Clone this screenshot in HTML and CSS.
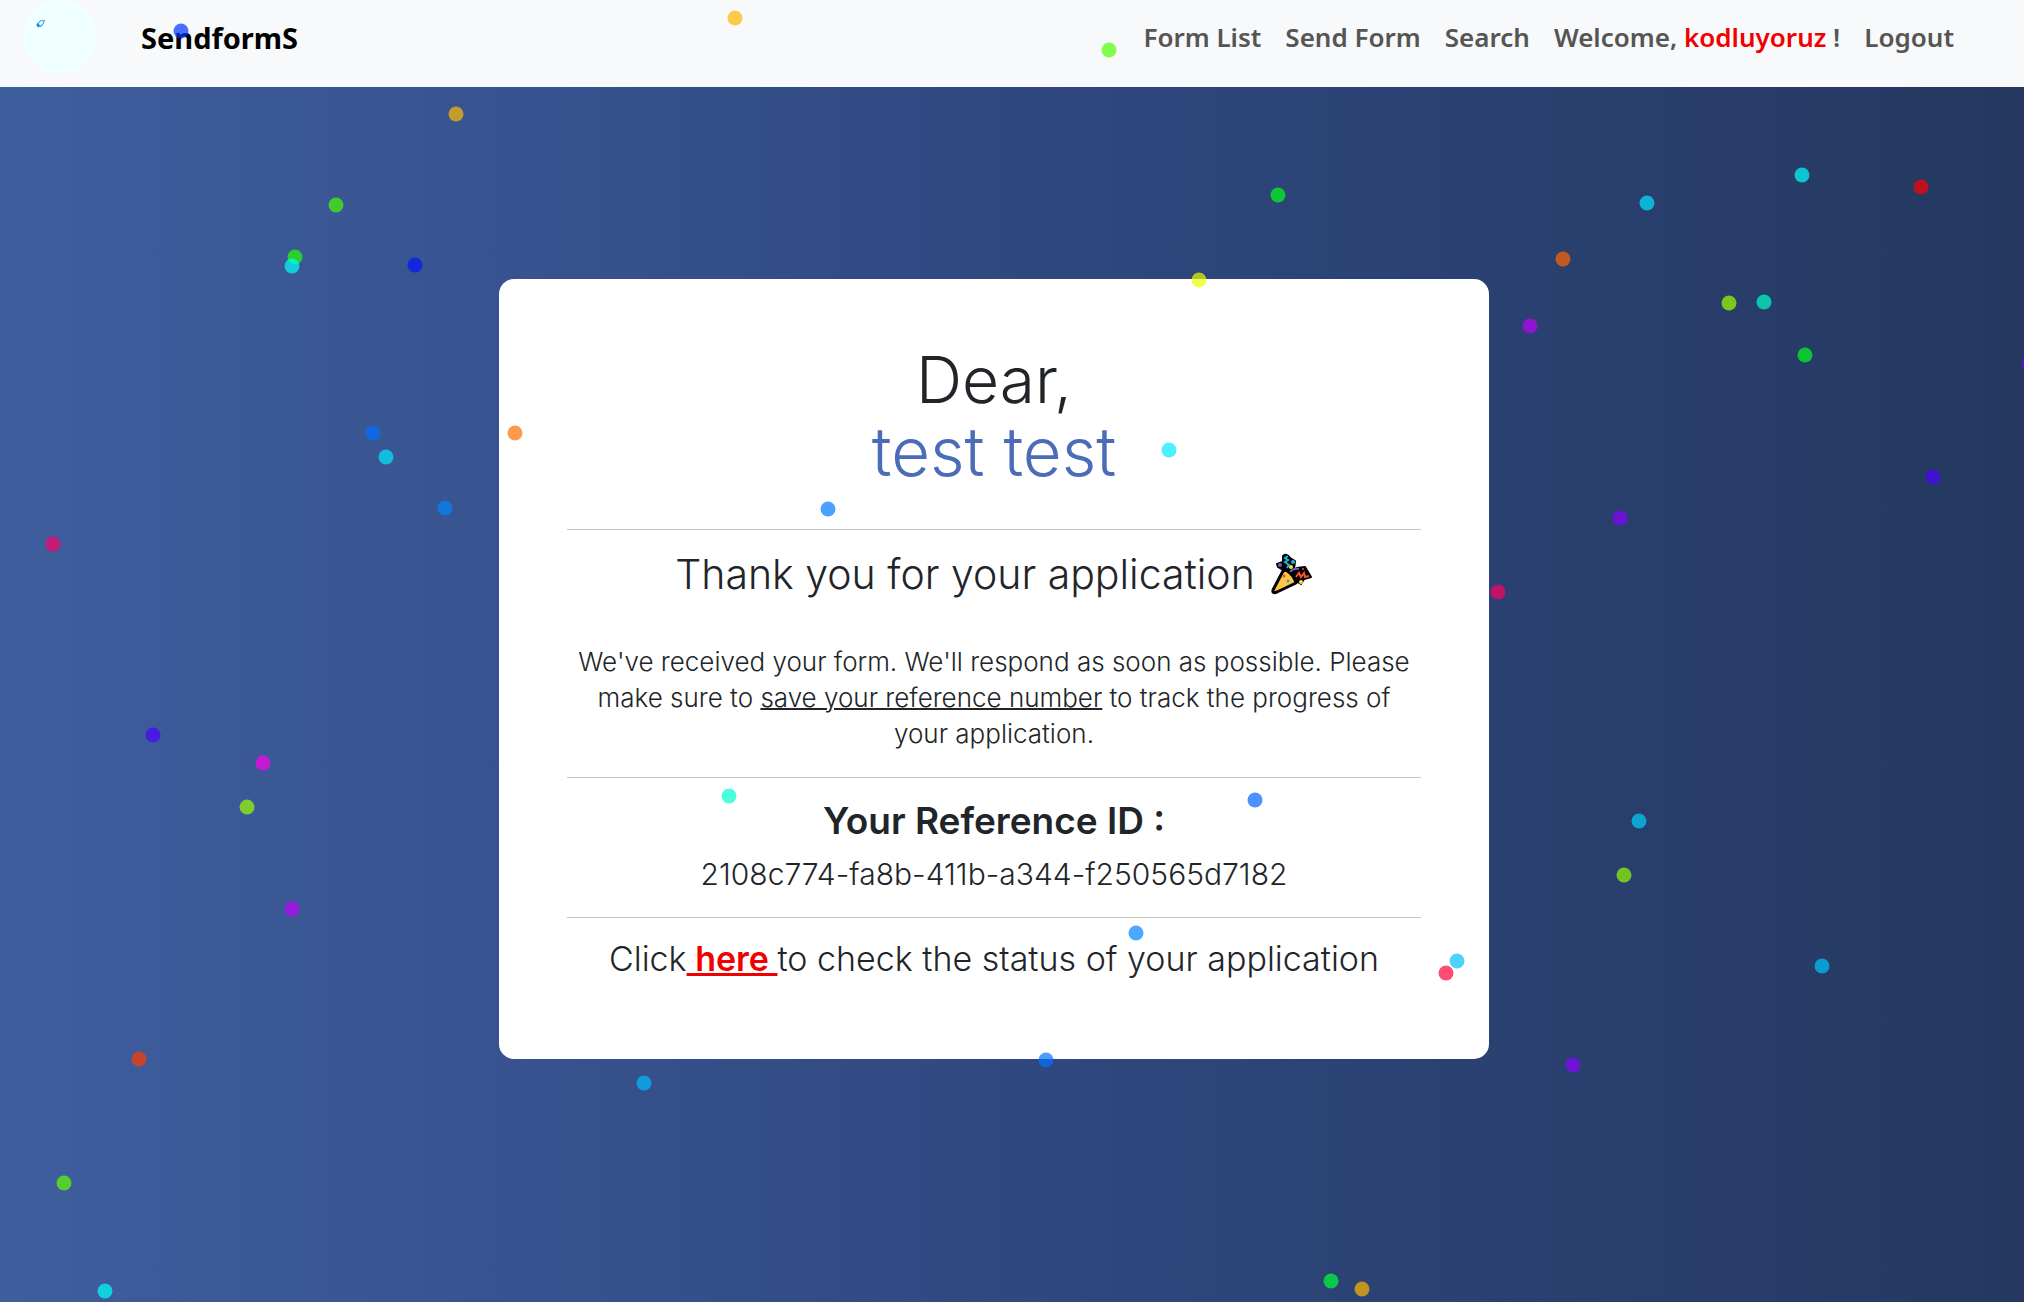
FILE: index.html
```
<!DOCTYPE html>
<html lang="en">
<head>
<meta charset="utf-8">
<title>SendformS</title>
<link rel="stylesheet" href="styles.css">
</head>
<body>
<header class="navbar">
  <a class="logo" href="#" aria-label="Home">
    <svg viewBox="0 0 74 74" width="74" height="74" aria-hidden="true">
      <circle cx="37" cy="37" r="37" fill="#f0ffff"/>
      <g fill="none" stroke="#2f9fe0" stroke-width="1">
        <path d="M21.500 20.500L17 21L15 24L17.500 26L20 24Z"/>
        <path d="M15 22.500L14.500 25M19.500 25.500L17 26.500"/>
      </g>
      <path d="M13 24.500L15.500 24L17 26.500L15 27.500Z" fill="#1b87cf"/>
    </svg>
  </a>
  <a class="brand" href="#">SendformS</a>
  <nav class="links">
    <a href="#">Form List</a>
    <a href="#">Send Form</a>
    <a href="#">Search</a>
    <a href="#">Welcome, <span class="user">kodluyoruz</span> !</a>
    <a href="#">Logout</a>
  </nav>
</header>
<main class="page">
  <section class="card">
    <h1 class="greeting">Dear,<br><span class="name">test test</span></h1>
    <hr>
    <h2 class="thanks">Thank you for your application
      <svg class="popper" viewBox="0 0 42 42" width="42" height="42" aria-hidden="true">
        <g stroke="#000" stroke-linejoin="round" stroke-linecap="round">
          <path d="M12 3Q16 0 19 5L24 8L23 17L14 18L7 14L6 11L12 9Z" fill="#000" stroke-width="2"/>
          <path d="M19 20L26 15L34 14L37 19L40 24L33 26L30 31L25 28Z" fill="#000" stroke-width="2"/>
          <path d="M12 18L2 37Q1 41 6 39L25 30Q23 22 15 17Z" fill="#ffc445" stroke-width="3"/>
        </g>
        <path d="M17 3L14 5L17 7L14 9L18 12L16 15" fill="none" stroke="#1fb5dc" stroke-width="2"/>
        <path d="M19 19Q22 15 28 16" fill="none" stroke="#6d5bc8" stroke-width="2"/>
        <path d="M25 24L28 20L30 24L33 20L34 24L38 23" fill="none" stroke="#f4512c" stroke-width="2"/>
        <circle cx="9" cy="12" r="2" fill="#6d5bc8"/>
        <circle cx="22" cy="9" r="2" fill="#1fb5dc"/>
        <circle cx="20" cy="14" r="2" fill="#ffdc3c"/>
        <circle cx="30" cy="29" r="2" fill="#ffdc3c"/>
        <circle cx="32" cy="16" r="1" fill="#f4512c"/>
        <circle cx="13" cy="23" r="1.500" fill="#f4512c"/>
        <circle cx="17" cy="28" r="1.500" fill="#1fb5c8"/>
      </svg>
    </h2>
    <p class="message">We've received your form. We'll respond as soon as possible. Please make sure to <u>save your reference number</u> to track the progress of your application.</p>
    <hr>
    <h2 class="ref-title">Your Reference ID :</h2>
    <p class="ref-id">2108c774-fa8b-411b-a344-f250565d7182</p>
    <hr>
    <p class="status">Click<a href="#"> here </a>to check the status of your application</p>
  </section>
</main>
<svg class="confetti" aria-hidden="true">
  <circle cx="181" cy="31" r="7.500" fill="hsl(228 100% 50%)"/>
  <circle cx="735" cy="18" r="7.500" fill="hsl(43 100% 50%)"/>
  <circle cx="1109" cy="50" r="7.500" fill="hsl(101 100% 50%)"/>
  <circle cx="456" cy="114" r="7.500" fill="hsl(44 100% 50%)"/>
  <circle cx="336" cy="205" r="7.500" fill="hsl(105 100% 50%)"/>
  <circle cx="295" cy="257" r="7.500" fill="hsl(111 100% 50%)"/>
  <circle cx="292" cy="266" r="7.500" fill="hsl(178 100% 50%)"/>
  <circle cx="415" cy="265" r="7.500" fill="hsl(235 100% 50%)"/>
  <circle cx="373" cy="433" r="7.500" fill="hsl(214 100% 50%)"/>
  <circle cx="386" cy="457" r="7.500" fill="hsl(185 100% 50%)"/>
  <circle cx="445" cy="508" r="7.500" fill="hsl(209 100% 50%)"/>
  <circle cx="53" cy="544" r="7.500" fill="hsl(336 100% 50%)"/>
  <circle cx="515" cy="433" r="7.500" fill="hsl(26 100% 50%)"/>
  <circle cx="1278" cy="195" r="7.500" fill="hsl(126 100% 50%)"/>
  <circle cx="1647" cy="203" r="7.500" fill="hsl(186 100% 50%)"/>
  <circle cx="1802" cy="175" r="7.500" fill="hsl(180 100% 50%)"/>
  <circle cx="1921" cy="187" r="7.500" fill="hsl(0 100% 50%)"/>
  <circle cx="1563" cy="259" r="7.500" fill="hsl(24 100% 50%)"/>
  <circle cx="1729" cy="303" r="7.500" fill="hsl(82 100% 50%)"/>
  <circle cx="1764" cy="302" r="7.500" fill="hsl(167 100% 50%)"/>
  <circle cx="1530" cy="326" r="7.500" fill="hsl(285 100% 50%)"/>
  <circle cx="1805" cy="355" r="7.500" fill="hsl(126 100% 50%)"/>
  <circle cx="2029" cy="363" r="7.500" fill="hsl(270 100% 50%)"/>
  <circle cx="1933" cy="477" r="7.500" fill="hsl(258 100% 50%)"/>
  <circle cx="1620" cy="518" r="7.500" fill="hsl(271 100% 50%)"/>
  <circle cx="1498" cy="592" r="7.500" fill="hsl(336 100% 50%)"/>
  <circle cx="153" cy="735" r="7.500" fill="hsl(258 100% 50%)"/>
  <circle cx="263" cy="763" r="7.500" fill="hsl(304 100% 50%)"/>
  <circle cx="247" cy="807" r="7.500" fill="hsl(83 100% 50%)"/>
  <circle cx="292" cy="909" r="7.500" fill="hsl(285 100% 50%)"/>
  <circle cx="139" cy="1059" r="7.500" fill="hsl(14 100% 50%)"/>
  <circle cx="64" cy="1183" r="7.500" fill="hsl(97 100% 50%)"/>
  <circle cx="105" cy="1291" r="7.500" fill="hsl(179 100% 50%)"/>
  <circle cx="1639" cy="821" r="7.500" fill="hsl(191 100% 50%)"/>
  <circle cx="1624" cy="875" r="7.500" fill="hsl(86 100% 50%)"/>
  <circle cx="1822" cy="966" r="7.500" fill="hsl(194 100% 50%)"/>
  <circle cx="1573" cy="1065" r="7.500" fill="hsl(273 100% 50%)"/>
  <circle cx="1457" cy="961" r="7.500" fill="hsl(195 100% 50%)"/>
  <circle cx="1446" cy="973" r="7.500" fill="hsl(346 100% 50%)"/>
  <circle cx="1199" cy="280" r="7.500" fill="hsl(65 100% 50%)"/>
  <circle cx="1169" cy="450" r="7.500" fill="hsl(185 100% 50%)"/>
  <circle cx="828" cy="509" r="7.500" fill="hsl(212 100% 50%)"/>
  <circle cx="729" cy="796" r="7.500" fill="hsl(168 100% 50%)"/>
  <circle cx="1255" cy="800" r="7.500" fill="hsl(217 100% 50%)"/>
  <circle cx="1136" cy="933" r="7.500" fill="hsl(209 100% 50%)"/>
  <circle cx="1046" cy="1060" r="7.500" fill="hsl(213 100% 50%)"/>
  <circle cx="644" cy="1083" r="7.500" fill="hsl(196 100% 50%)"/>
  <circle cx="1331" cy="1281" r="7.500" fill="hsl(134 100% 50%)"/>
  <circle cx="1362" cy="1289" r="7.500" fill="hsl(43 100% 50%)"/>
</svg>
</body>
</html>
```
FILE: styles.css
```
* { box-sizing: border-box; }

body {
  margin: 0;
  min-height: 100vh;
  position: relative;
  background: linear-gradient(to right, #3f5e9e, #304880, #243860);
  color: #212529;
  font-family: Inter, sans-serif;
  font-weight: 300;
}

.navbar {
  display: flex;
  align-items: center;
  padding: 0 70px 13px 23px;
  background: #f8f9fa;
  font-family: "Noto Sans", sans-serif;
  font-weight: 600;
}
.navbar a { text-decoration: none; }
.logo { display: flex; }
.brand {
  margin-left: 44px;
  color: #000;
  font-size: 29px;
  font-weight: 700;
}
.links {
  display: flex;
  flex-wrap: wrap;
  gap: 24px;
  margin-left: auto;
  font-size: 26px;
}
.links a { color: #555; }
.links .user { color: #f00000; }

.page {
  display: flex;
  justify-content: center;
  padding: 192px 36px 40px 0;
}
.card {
  width: 100%;
  max-width: 990px;
  padding: 65px 68px 79px;
  border-radius: 15px;
  background: #fff;
  text-align: center;
}
.card h1, .card h2, .card p { margin: 0; }
.card hr {
  margin: 25px 0 20px;
  border: 0;
  border-top: 1px solid #c4c5c6;
}
.card .greeting {
  margin-bottom: 40px;
  font-size: 64px;
  font-weight: 300;
  line-height: 72px;
}
.name {
  color: #4b6cb7;
  font-size: 67px;
}
.card .thanks {
  display: flex;
  justify-content: center;
  align-items: center;
  gap: 16px;
  margin-bottom: 46px;
  font-size: 41px;
  font-weight: 300;
  line-height: 48px;
}
.popper { flex: none; }
.message {
  padding: 0 8px;
  font-size: 26px;
  line-height: 36px;
}
.message u { text-decoration-thickness: 2px; }
.card .ref-title {
  margin-bottom: 12px;
  font-size: 37px;
  font-weight: 600;
  line-height: 46px;
}
.ref-id {
  font-size: 30px;
  line-height: 36px;
}
.status {
  font-size: 34px;
  line-height: 42px;
}
.status a {
  color: #f00000;
  font-weight: 600;
  text-decoration-thickness: 3px;
}

.confetti {
  position: absolute;
  inset: 0;
  width: 100%;
  height: 100%;
  overflow: hidden;
  pointer-events: none;
}
.confetti circle { opacity: 0.7; }
```
